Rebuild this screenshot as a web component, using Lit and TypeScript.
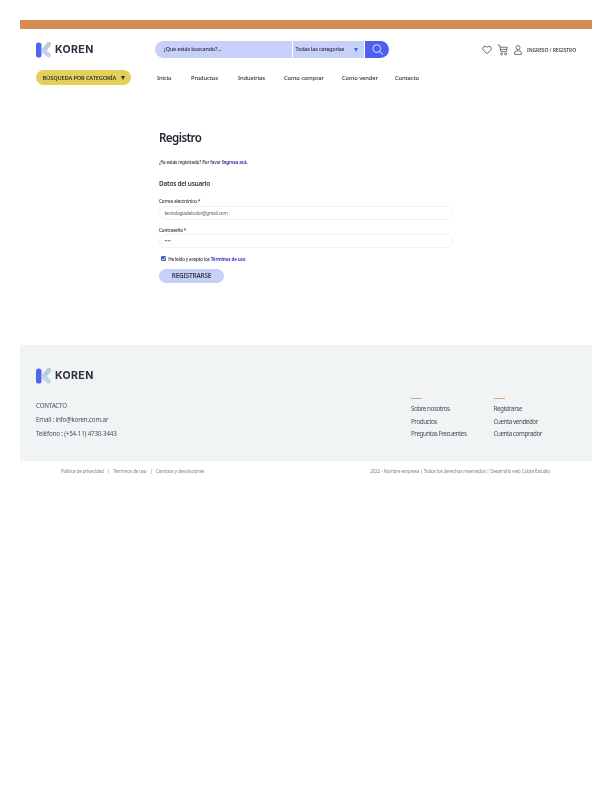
import { LitElement, html, css } from "lit";
import { customElement } from "lit/decorators.js";

const logo = () => html`<svg class="mark" viewBox="0 0 16 16" width="16" height="16" aria-hidden="true">
  <rect x="0" y="0.5" width="5.5" height="15" rx="2.6" fill="#4f66ec"></rect>
  <path d="M7.6 8.6 13 2" stroke="#b5cfd6" stroke-width="4.6" stroke-linecap="round"></path>
  <path d="M8.2 9 12.6 13.2" stroke="#c4d2f6" stroke-width="4.6" stroke-linecap="round"></path>
</svg>`;

@customElement("app-root")
export class AppRoot extends LitElement {
  static styles = css`
    :host { display: block; font-family: "Noto Sans", sans-serif; color: #2b2d3a; background: #fff; min-height: 792px; filter: blur(0.35px); }
    .page { padding: 20px 20px 0; }
    .bar { height: 9px; background: #d68c53; }
    .top { display: flex; align-items: center; height: 17px; margin-top: 12px; padding-left: 16px; }
    .brand { display: flex; align-items: center; gap: 3px; width: 119px; flex: none; }
    .mark { display: block; flex: none; }
    .word { font: 700 10.6px/16px Inter, sans-serif; letter-spacing: 0.35px; color: #2c3040; }
    .search { display: flex; width: 234px; height: 17px; flex: none; font-size: 5.4px; line-height: 17px; font-weight: 500; letter-spacing: -0.16px; }
    .q { width: 137px; background: #c7d0f8; border-radius: 9px 0 0 9px; padding-left: 8.5px; box-sizing: border-box; }
    .cat { width: 71px; margin-left: 1px; background: #c7d0f8; padding: 0 6px 0 2.5px; box-sizing: border-box; display: flex; justify-content: space-between; align-items: center; }
    .tri { width: 0; height: 0; border-left: 2.5px solid transparent; border-right: 2.5px solid transparent; border-top: 4px solid #4f5ff0; }
    .go { width: 24px; margin-left: 1px; background: #4f5ff0; border-radius: 0 9px 9px 0; display: flex; align-items: center; justify-content: center; }
    .acts { margin-left: auto; display: flex; align-items: center; padding-right: 16px; }
    .acts svg { display: block; flex: none; }
    .login { font-size: 5px; font-weight: 500; margin-left: 5px; color: #2b2d3a; letter-spacing: -0.08px; }
    .ic-cart { margin-left: 5px; }
    .ic-user { margin-left: 6px; }
    .navrow { display: flex; align-items: center; height: 15px; margin-top: 12px; padding-left: 16px; }
    .pill { width: 95px; height: 15px; flex: none; background: #e3cf5a; border-radius: 8px; display: flex; align-items: center; justify-content: space-between; padding: 0 6px 0 6.5px; box-sizing: border-box; font-size: 5.7px; font-weight: 600; color: #34342c; letter-spacing: -0.16px; white-space: nowrap; }
    .pill .tri { border-top-color: #34342c; }
    .nav { display: flex; margin-left: 26px; font-size: 5.8px; font-weight: 500; letter-spacing: -0.12px; }
    .nav span:nth-child(1) { width: 34px; } .nav span:nth-child(2) { width: 47px; } .nav span:nth-child(3) { width: 46px; }
    .nav span:nth-child(4) { width: 58px; } .nav span:nth-child(5) { width: 53px; }
    main { padding: 44px 0 0 139px; height: 260px; box-sizing: border-box; }
    h1 { margin: 0; font-size: 11.6px; line-height: 17px; font-weight: 600; color: #262836; letter-spacing: -0.6px; }
    .have { margin: 12.5px 0 0; font-size: 4.5px; line-height: 7px; font-weight: 500; letter-spacing: -0.12px; }
    .have a { color: #4b2fa8; font-weight: 700; }
    h2 { margin: 13px 0 0; font-size: 6.5px; line-height: 10px; font-weight: 600; color: #30323f; letter-spacing: -0.27px; }
    label { display: block; font-size: 4.5px; line-height: 6px; font-weight: 500; letter-spacing: -0.1px; }
    .l1 { margin-top: 9.5px; } .l2 { margin-top: 7px; }
    .field { width: 294px; height: 14px; margin-top: 1.5px; box-sizing: border-box; border: 1px solid #eff3f3; border-radius: 7px; font-size: 4.7px; line-height: 12px; padding-left: 4.5px; color: #555a60; background: #fff; letter-spacing: -0.18px; }
    .check { display: flex; align-items: center; gap: 2px; margin: 7px 0 0 1.7px; font-size: 4.6px; font-weight: 500; height: 7px; letter-spacing: -0.18px; }
    .box { width: 5.5px; height: 5.5px; background: #3d68c8; border-radius: 1px; display: flex; }
    .check a { color: #3b3bd8; font-weight: 700; }
    .btn { width: 65px; height: 14px; margin-top: 7px; border-radius: 7px; background: #c7d0f8; font-size: 6.4px; font-weight: 600; line-height: 14px; text-align: center; color: #33364a; letter-spacing: -0.18px; }
    footer { background: #f1f4f5; height: 116px; display: flex; padding: 0 0 0 16px; box-sizing: border-box; }
    .fl { padding-top: 23px; width: 375px; flex: none; }
    .fl .brand { height: 16px; }
    .contact { margin-top: 15px; font-size: 6.2px; line-height: 14px; color: #4a4d55; letter-spacing: -0.16px; }
    .col { padding-top: 53px; font-size: 6.3px; line-height: 12.5px; color: #4a4d55; width: 82.5px; flex: none; letter-spacing: -0.45px; }
    .dash { width: 11px; height: 1px; background: #e0a06e; margin-bottom: 4px; }
    .legal { display: flex; justify-content: space-between; padding: 5px 42px 0 41px; font-size: 4.5px; line-height: 10px; color: #7d8085; letter-spacing: -0.1px; }
    .legal .sep { margin: 0 3.5px; }
  `;

  render() {
    return html`<div class="page">
      <div class="bar"></div>
      <header class="top">
        <div class="brand">${logo()}<span class="word">KOREN</span></div>
        <div class="search">
          <div class="q">¿Que estás buscando?...</div>
          <div class="cat"><span>Todas las categorías</span><i class="tri"></i></div>
          <div class="go"><svg width="13" height="13" viewBox="0 0 13 13" fill="none" stroke="#fff" stroke-width=".8"><circle cx="5.8" cy="5.6" r="3.9"></circle><path d="M8.6 8.4 12 11.6"></path></svg></div>
        </div>
        <div class="acts">
          <svg width="10" height="10" viewBox="0 0 10 10" fill="none" stroke="#3a3c44" stroke-width=".8"><path d="M5 8.8 1.3 5.1a2.3 2.3 0 0 1 3.3-3.2l.4.4.4-.4a2.3 2.3 0 0 1 3.3 3.2z"></path></svg>
          <svg class="ic-cart" width="11" height="12" viewBox="0 0 11 12" fill="none" stroke="#3a3c44" stroke-width=".7"><path d="M.6 1h2l1.2 6.6h5.6L10.3 3.2H3"></path><path d="M3.4 5.4h6.4"></path><circle cx="4.6" cy="9.9" r="1"></circle><circle cx="8.6" cy="9.9" r="1"></circle></svg>
          <svg class="ic-user" width="8" height="10" viewBox="0 0 8 10" fill="none" stroke="#3a3c44" stroke-width=".7"><circle cx="4" cy="2.6" r="2"></circle><path d="M.6 9.4V8a2.2 2.2 0 0 1 2.2-2.2h2.4A2.2 2.2 0 0 1 7.4 8v1.4z"></path></svg>
          <span class="login">INGRESO / REGISTRO</span>
        </div>
      </header>
      <div class="navrow">
        <div class="pill"><span>BÚSQUEDA POR CATEGORÍA</span><i class="tri"></i></div>
        <nav class="nav"><span>Inicio</span><span>Productos</span><span>Industrias</span><span>Como comprar</span><span>Como vender</span><span>Contacto</span></nav>
      </div>
      <main>
        <h1>Registro</h1>
        <p class="have">¿Ya estás registrado? Por favor <a>Ingresa acá.</a></p>
        <h2>Datos del usuario</h2>
        <label class="l1">Correo electrónico *</label>
        <div class="field">tecnologiadelcolor@gmail.com</div>
        <label class="l2">Contraseña *</label>
        <div class="field">••••</div>
        <div class="check"><span class="box"><svg width="5.5" height="5.5" viewBox="0 0 5 5" fill="none" stroke="#fff" stroke-width=".8"><path d="M1 2.6 2.1 3.7 4 1.3"></path></svg></span><span>He leído y acepto los <a>Términos de uso</a></span></div>
        <div class="btn">REGISTRARSE</div>
      </main>
      <footer>
        <div class="fl">
          <div class="brand">${logo()}<span class="word">KOREN</span></div>
          <div class="contact"><div>CONTACTO</div><div>Email : info@koren.com.ar</div><div>Teléfono : (+54-11) 4730-3443</div></div>
        </div>
        <div class="col"><div class="dash"></div><div>Sobre nosotros</div><div>Productos</div><div>Preguntas Frecuentes</div></div>
        <div class="col"><div class="dash"></div><div>Registrarse</div><div>Cuenta vendedor</div><div>Cuenta comprador</div></div>
      </footer>
      <div class="legal">
        <div>Política de privacidad<span class="sep">|</span>Términos de uso<span class="sep">|</span>Cambios y devoluciones</div>
        <div>2022 - Nombre empresa | Todos los derechos reservados | Desarrollo web Cobra Estudio</div>
      </div>
    </div>`;
  }
}
